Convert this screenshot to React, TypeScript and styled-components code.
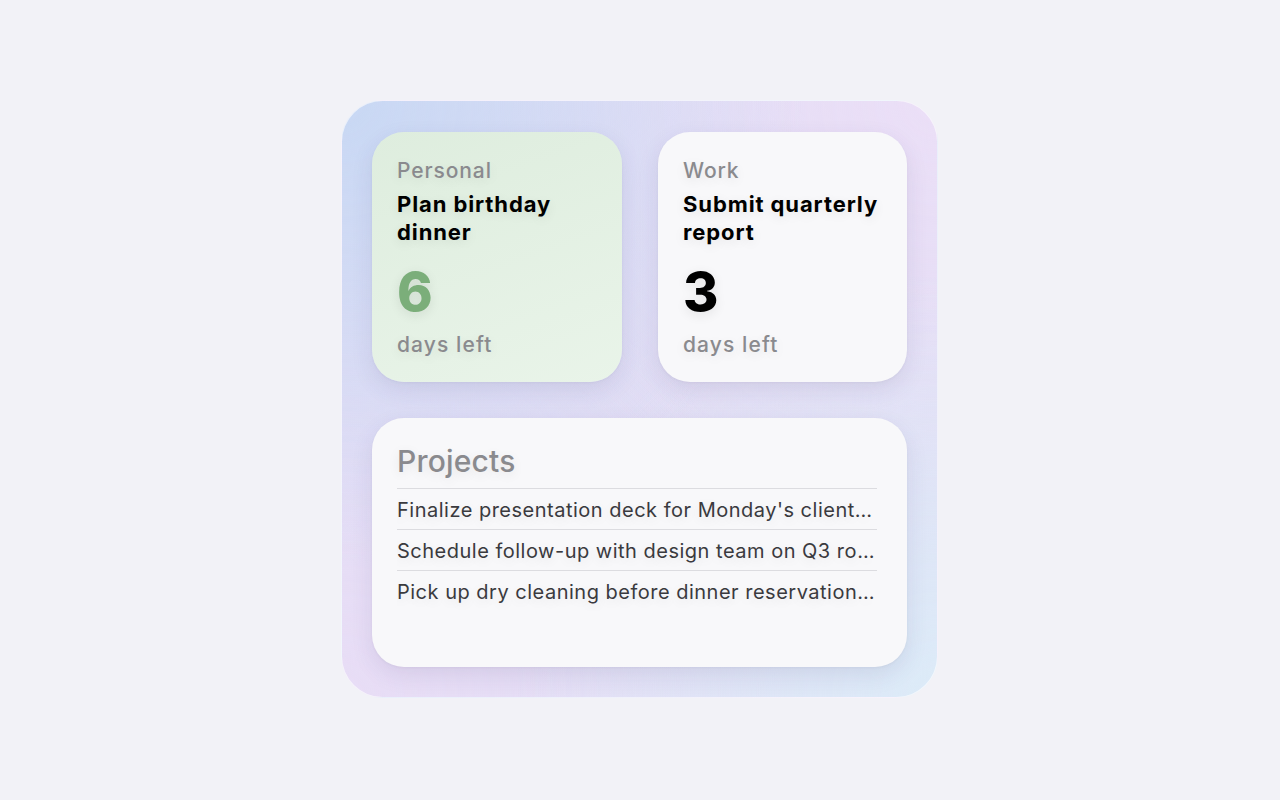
import styled, { createGlobalStyle } from 'styled-components';

const GlobalStyle = createGlobalStyle`
  html, body {
    margin: 0;
    padding: 0;
    background: #f2f2f7;
    font-family: Inter, "Noto Sans", sans-serif;
    -webkit-font-smoothing: antialiased;
  }
`;

const Page = styled.div`
  width: 1280px;
  height: 800px;
  box-sizing: border-box;
  padding: 100px 0 0 341px;
`;

const Stack = styled.div`
  width: 597px;
  height: 598px;
  box-sizing: border-box;
  padding: 31px 30px 30px 30px;
  border-radius: 42px;
  border: 1px solid rgba(255, 255, 255, 0.6);
  background:
    radial-gradient(circle at 0% 0%, #c8d8f4 0%, rgba(200, 216, 244, 0) 55%),
    radial-gradient(circle at 100% 100%, #dcebf8 0%, rgba(220, 235, 248, 0) 50%),
    radial-gradient(circle at 0% 100%, #e8ddf6 0%, rgba(232, 221, 246, 0) 55%),
    radial-gradient(circle at 100% 0%, #ebdff7 0%, rgba(235, 223, 247, 0) 55%),
    #e1ddf4;
  display: grid;
  grid-template-columns: 250px 249px;
  grid-template-rows: 250px 249px;
  column-gap: 36px;
  row-gap: 36px;
`;

const Widget = styled.div<{ $tint?: 'green' | 'plain'; $wide?: boolean }>`
  grid-column: ${(p) => (p.$wide ? '1 / span 2' : 'auto')};
  box-sizing: border-box;
  border-radius: 32px;
  padding: ${(p) => (p.$wide ? '23px 30px 20px 25px' : '26px 20px 24px 25px')};
  background: ${(p) =>
    p.$tint === 'green'
      ? 'linear-gradient(160deg, #deedde 0%, #e9f4e9 100%)'
      : '#f8f8fa'};
  box-shadow: 0 8px 22px rgba(60, 50, 110, 0.1), 0 1px 3px rgba(0, 0, 0, 0.04);
  display: flex;
  flex-direction: column;
  overflow: hidden;
  text-shadow: 0 3px 12px rgba(0, 0, 0, 0.09);
`;

const Category = styled.div`
  font-size: 21px;
  font-weight: 500;
  line-height: 26px;
  letter-spacing: 0.9px;
  color: #8a8a8e;
`;

const Title = styled.div`
  margin-top: 6px;
  font-size: 22px;
  font-weight: 700;
  line-height: 28px;
  letter-spacing: 0.9px;
  color: #000;
`;

const Count = styled.div<{ $color: string }>`
  margin-top: 15px;
  font-size: 54px;
  font-weight: 800;
  line-height: 62px;
  color: ${(p) => p.$color};
`;

const Caption = styled.div`
  margin-top: auto;
  font-size: 21px;
  font-weight: 500;
  line-height: 26px;
  letter-spacing: 1.1px;
  color: #8a8a8e;
`;

const ListHeading = styled.div`
  font-size: 30px;
  font-weight: 500;
  line-height: 40px;
  letter-spacing: 0.2px;
  color: #8a8a8e;
  padding-bottom: 7px;
  border-bottom: 1px solid #dcdce0;
`;

const ListItem = styled.div<{ $last?: boolean }>`
  padding-top: 2px;
  font-size: 20px;
  font-weight: 400;
  line-height: 38px;
  letter-spacing: 0.5px;
  color: #3a3a3e;
  white-space: nowrap;
  overflow: hidden;
  text-overflow: ellipsis;
  max-width: 480px;
  border-bottom: ${(p) => (p.$last ? 'none' : '1px solid #dcdce0')};
`;

const reminders = [
  { category: 'Personal', title: 'Plan birthday dinner', days: 6, tint: 'green' as const, color: '#7bae7a' },
  { category: 'Work', title: 'Submit quarterly report', days: 3, tint: 'plain' as const, color: '#000' },
];

const projects = [
  "Finalize presentation deck for Monday's client meeting",
  'Schedule follow-up with design team on Q3 roadmap',
  'Pick up dry cleaning before dinner reservations tonight',
];

export default function App() {
  return (
    <>
      <GlobalStyle />
      <Page>
        <Stack>
          {reminders.map((r) => (
            <Widget key={r.category} $tint={r.tint}>
              <Category>{r.category}</Category>
              <Title>{r.title}</Title>
              <Count $color={r.color}>{r.days}</Count>
              <Caption>days left</Caption>
            </Widget>
          ))}
          <Widget $wide>
            <ListHeading>Projects</ListHeading>
            {projects.map((p, i) => (
              <ListItem key={p} $last={i === projects.length - 1}>
                {p}
              </ListItem>
            ))}
          </Widget>
        </Stack>
      </Page>
    </>
  );
}
